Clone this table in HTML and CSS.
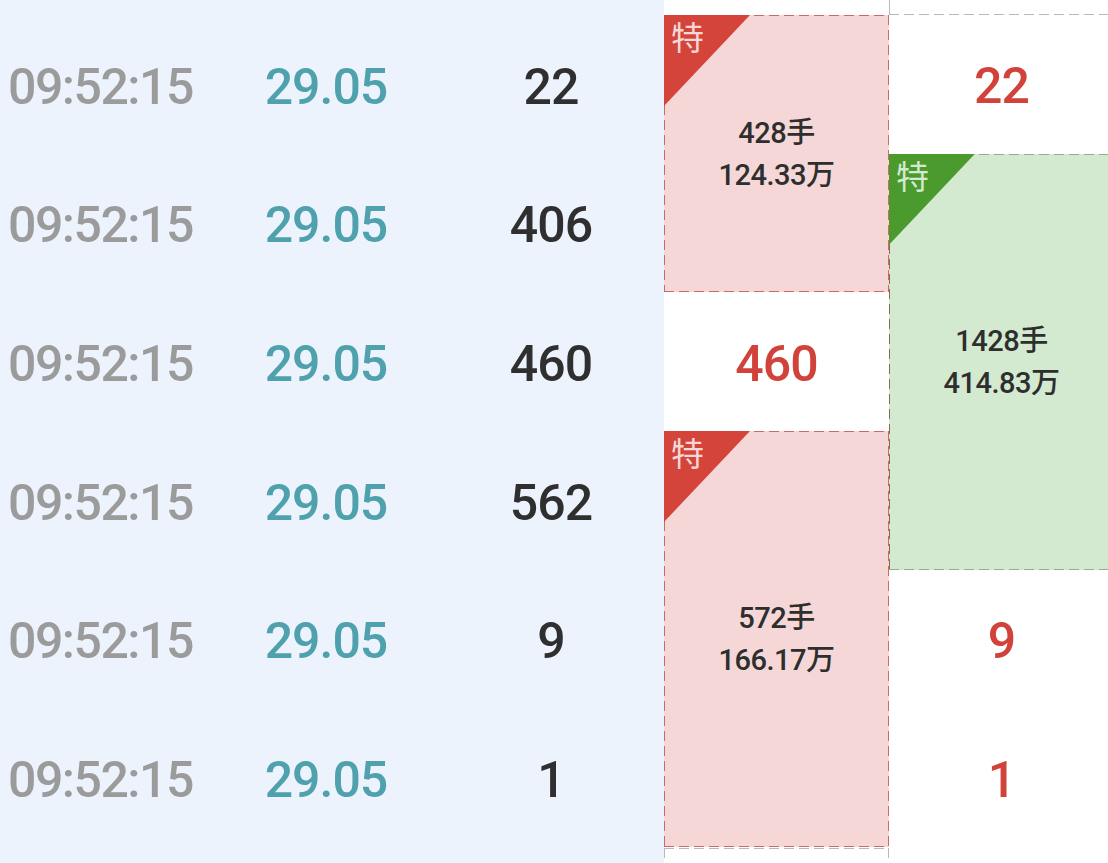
FILE: index.html
```html
<!DOCTYPE html>
<html lang="zh-CN">
<head>
<meta charset="utf-8">
<title>逐笔成交</title>
<link rel="stylesheet" href="styles.css">
</head>
<body>
<div class="screen">
  <div class="left">
    <div class="row"><span class="time">09:52:15</span><span class="price">29.05</span><span class="vol">22</span></div>
    <div class="row"><span class="time">09:52:15</span><span class="price">29.05</span><span class="vol">406</span></div>
    <div class="row"><span class="time">09:52:15</span><span class="price">29.05</span><span class="vol">460</span></div>
    <div class="row"><span class="time">09:52:15</span><span class="price">29.05</span><span class="vol">562</span></div>
    <div class="row"><span class="time">09:52:15</span><span class="price">29.05</span><span class="vol">9</span></div>
    <div class="row"><span class="time">09:52:15</span><span class="price">29.05</span><span class="vol">1</span></div>
  </div>
  <div class="right">
    <div class="col col-a">
      <div class="head"></div>
      <div class="box red r2">
        <span class="tag">特</span>
        <div class="info"><span>428手</span><span>124.33万</span></div>
      </div>
      <div class="cell r1">460</div>
      <div class="box red r3">
        <span class="tag">特</span>
        <div class="info"><span>572手</span><span>166.17万</span></div>
      </div>
      <div class="box grey tail"></div>
    </div>
    <div class="col col-b">
      <div class="head prev"></div>
      <div class="cell r1">22</div>
      <div class="box green r3">
        <span class="tag">特</span>
        <div class="info"><span>1428手</span><span>414.83万</span></div>
      </div>
      <div class="cell r1">9</div>
      <div class="cell r1">1</div>
    </div>
  </div>
</div>
</body>
</html>
```

FILE: styles.css
```css
* { box-sizing: border-box; }

html, body {
  margin: 0;
  padding: 0;
  background: #ffffff;
}

body {
  font-family: Roboto, "Noto Sans CJK SC", sans-serif;
  overflow: hidden;
}

.screen {
  --row: 138.67px;
  display: flex;
  width: 1108px;
  height: 863px;
  overflow: hidden;
}

/* left panel */
.left {
  width: 664px;
  flex: none;
  background: #ecf3fc;
  padding-top: 15px;
  display: flex;
  flex-direction: column;
}

.row {
  height: var(--row);
  display: grid;
  grid-template-columns: 213px 226px 224px;
  align-items: center;
  padding-top: 5px;
  font-size: 50px;
  letter-spacing: -1px;
  line-height: 1;
  font-weight: 500;
}

.time {
  padding-left: 8px;
  letter-spacing: -1.5px;
  color: #9b9b9b;
}

.price {
  text-align: center;
  color: #4fa1ad;
}

.vol {
  text-align: center;
  color: #2f2f2f;
}

/* right panel */
.right {
  flex: none;
  width: 450px;
  display: flex;
}

.col {
  flex: none;
  display: flex;
  flex-direction: column;
}

.col-a { width: 225px; }
.col-b { width: 225px; }

.head {
  height: 15px;
  flex: none;
}

.head.prev {
  --dash: #b9b9b9;
  background:
    repeating-linear-gradient(90deg, var(--dash) 0 10px, transparent 10px 15px) left bottom / 100% 1px no-repeat,
    linear-gradient(var(--dash), var(--dash)) left top / 1px 100% no-repeat;
}

.r1 { height: var(--row); flex: none; }
.r2 { height: calc(var(--row) * 2); flex: none; }
.r3 { height: calc(var(--row) * 3); flex: none; }

.cell {
  display: flex;
  align-items: center;
  justify-content: center;
  padding-top: 4px;
  font-size: 50px;
  letter-spacing: -1px;
  font-weight: 500;
  color: #d1433a;
  line-height: 1;
}

.box {
  position: relative;
  display: flex;
  align-items: center;
  justify-content: center;
  background:
    repeating-linear-gradient(90deg, var(--dash) 0 10px, transparent 10px 15px) left top / 100% 1px no-repeat,
    repeating-linear-gradient(90deg, var(--dash) 0 10px, transparent 10px 15px) left bottom / 100% 1px no-repeat,
    repeating-linear-gradient(180deg, var(--dash) 0 10px, transparent 10px 15px) left top / 1px 100% no-repeat,
    repeating-linear-gradient(180deg, var(--dash) 0 10px, transparent 10px 15px) right top / 1px 100% no-repeat,
    var(--fill);
}

.box.red {
  --dash: #c96b67;
  --fill: #f5d7d7;
  --tag: #d4443a;
}

.box.green {
  --dash: #94ad8c;
  --fill: #d3ead0;
  --tag: #4a9a2d;
}

.box.green::before {
  content: "";
  position: absolute;
  left: 0;
  top: 0;
  bottom: 0;
  width: 1px;
  background: repeating-linear-gradient(180deg, #8b6a4f 0 10px, transparent 10px 15px);
}

.box.grey {
  --dash: #b8b8b8;
  --fill: #ffffff;
  flex: none;
  height: 60px;
  margin-top: 1px;
}

.tag {
  position: absolute;
  left: 0;
  top: 0;
  width: 86px;
  height: 91px;
  background: var(--tag);
  clip-path: polygon(0 0, 100% 0, 0 100%);
  color: var(--fill);
  font-family: "Noto Sans CJK SC", sans-serif;
  font-size: 33px;
  line-height: 1;
  padding: 5px 0 0 7px;
}

.info {
  display: flex;
  flex-direction: column;
  align-items: center;
  font-size: 29px;
  letter-spacing: -0.5px;
  line-height: 42px;
  color: #2e2e2e;
  font-weight: 500;
}
```
